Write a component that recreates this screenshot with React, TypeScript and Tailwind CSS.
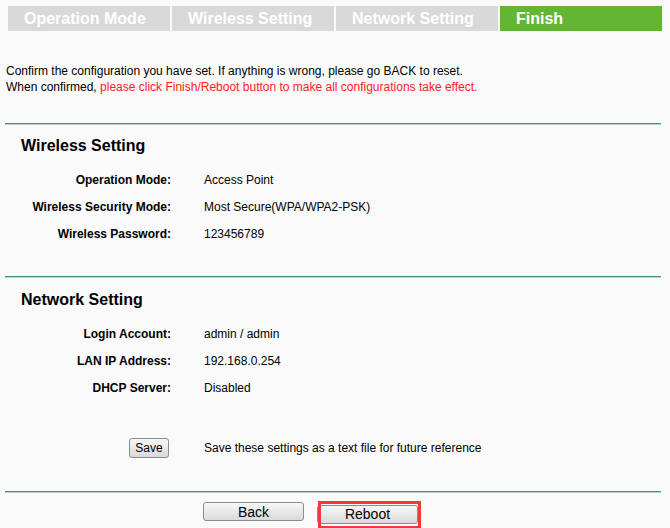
const TABS = [
  { label: "Operation Mode", active: false },
  { label: "Wireless Setting", active: false },
  { label: "Network Setting", active: false },
  { label: "Finish", active: true },
];

const WIRELESS = [
  { label: "Operation Mode:", value: "Access Point" },
  { label: "Wireless Security Mode:", value: "Most Secure(WPA/WPA2-PSK)" },
  { label: "Wireless Password:", value: "123456789" },
];

const NETWORK = [
  { label: "Login Account:", value: "admin / admin" },
  { label: "LAN IP Address:", value: "192.168.0.254" },
  { label: "DHCP Server:", value: "Disabled" },
];

function Divider({ className = "" }: { className?: string }) {
  return (
    <div className={`ml-[5px] w-[656px] ${className}`}>
      <div className="h-[1px] bg-[#3f9468]" />
      <div className="h-[1px] bg-[#b9d6c4]" />
    </div>
  );
}

function Row({ label, value }: { label: string; value: string }) {
  return (
    <div className="flex h-[27px] items-center text-[12px]">
      <div className="w-[171px] text-right font-bold text-black">{label}</div>
      <div className="ml-[33px] text-black">{value}</div>
    </div>
  );
}

const btn =
  "h-[19px] w-[101px] rounded-[3px] border border-[#8c8c8c] bg-gradient-to-b from-[#f7f7f7] to-[#dadada] text-[14px] leading-none text-black";

export default function App() {
  return (
    <div
      className="h-[528px] w-[670px] overflow-hidden bg-[#fafafa] text-black"
      style={{ fontFamily: '"Liberation Sans", Arial, sans-serif' }}
    >
      <div className="ml-[8px] flex gap-[2px] pt-[6px]">
        {TABS.map((t) => (
          <div
            key={t.label}
            className={`flex h-[25px] w-[162px] items-center pl-4 text-[16px] font-bold text-white ${
              t.active ? "bg-[#63b634]" : "bg-[#d9d9d9]"
            }`}
          >
            {t.label}
          </div>
        ))}
      </div>

      <div className="mt-[32px] pl-[6px] text-[12px] leading-[16px]">
        <div>Confirm the configuration you have set. If anything is wrong, please go BACK to reset.</div>
        <div>
          When confirmed, <span className="text-[#ff1a1a]">please click Finish/Reboot button to make all configurations take effect.</span>
        </div>
      </div>

      <Divider className="mt-[28px]" />

      <div className="mt-[12px] pl-[21px] text-[16px] font-bold leading-[18px]">Wireless Setting</div>
      <div className="mt-[11px]">
        {WIRELESS.map((r) => (
          <Row key={r.label} {...r} />
        ))}
      </div>

      <Divider className="mt-[29px]" />

      <div className="mt-[13px] pl-[21px] text-[16px] font-bold leading-[18px]">Network Setting</div>
      <div className="mt-[11px]">
        {NETWORK.map((r) => (
          <Row key={r.label} {...r} />
        ))}
      </div>

      <div className="mt-[33px] flex h-[27px] items-center text-[12px]">
        <div className="flex w-[171px] justify-end pr-[2px]">
          <button className="h-[20px] w-[40px] rounded-[3px] border border-[#8c8c8c] bg-gradient-to-b from-[#f7f7f7] to-[#dadada] text-[12px] leading-none">
            Save
          </button>
        </div>
        <div className="ml-[33px]">Save these settings as a text file for future reference</div>
      </div>

      <Divider className="mt-[30px]" />

      <div className="mt-[9px] flex gap-[13px] pl-[203px]">
        <button className={btn}>Back</button>
        <div className="relative">
          <button className={btn}>Reboot</button>
          <div className="pointer-events-none absolute -bottom-[3px] -right-[3px] -top-[1px] left-[1px] border-[3px] border-[#f03a3a]" />
        </div>
      </div>
    </div>
  );
}
